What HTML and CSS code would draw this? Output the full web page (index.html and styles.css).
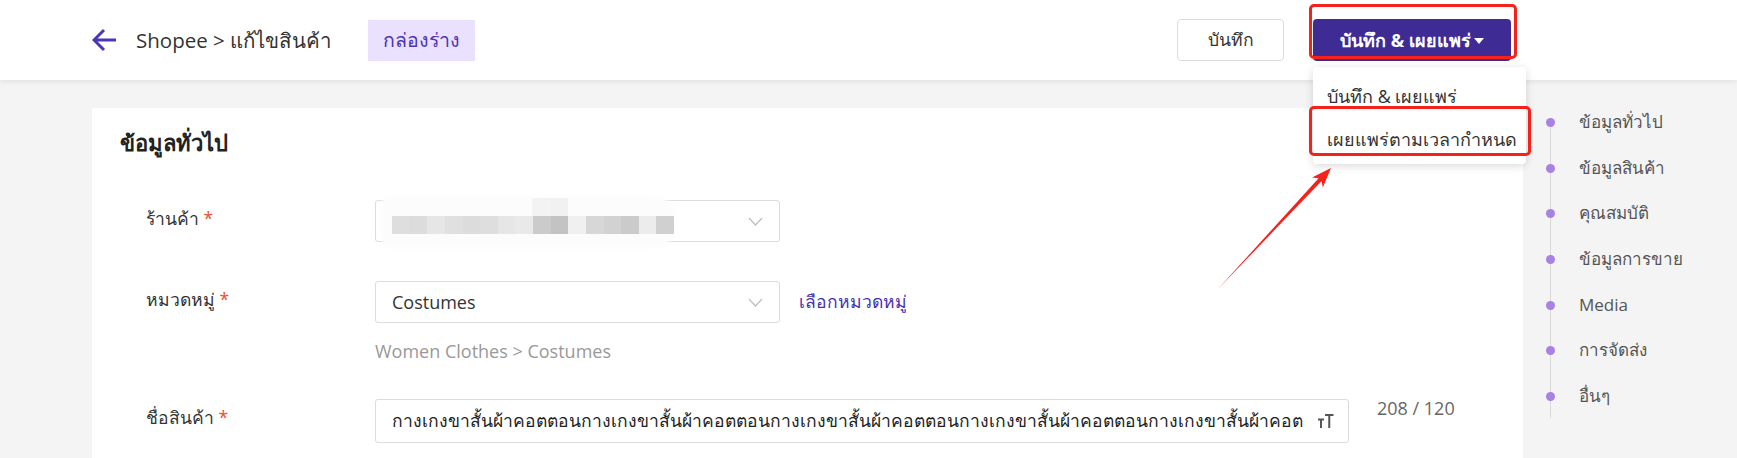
FILE: index.html
```html
<!DOCTYPE html>
<html lang="th">
<head>
<meta charset="utf-8">
<title>Shopee แก้ไขสินค้า</title>
<link rel="stylesheet" href="styles.css">
</head>
<body>
<header class="topbar">
  <div class="topbar-left">
    <svg class="back-icon" width="26" height="24" viewBox="0 0 26 24"><path d="M2 12 H24 M12 2 L2 12 L12 22" fill="none" stroke="#4a37b6" stroke-width="3" stroke-linecap="butt" stroke-linejoin="miter"/></svg>
    <span class="crumb">Shopee &gt; แก้ไขสินค้า</span>
    <span class="badge">กล่องร่าง</span>
  </div>
  <div class="topbar-right">
    <button class="btn btn-outline">บันทึก</button>
    <div class="publish">
      <button class="btn btn-primary">บันทึก &amp; เผยแพร่<span class="caret"></span></button>
      <div class="dropdown">
        <div class="dd-item">บันทึก &amp; เผยแพร่</div>
        <div class="dd-item">เผยแพร่ตามเวลากำหนด</div>
      </div>
    </div>
  </div>
</header>

<main class="main">
  <section class="card">
    <h2 class="card-title">ข้อมูลทั่วไป</h2>
    <div class="form">
      <div class="row row-shop">
        <label class="label">ร้านค้า <span class="req">*</span></label>
        <div class="control">
          <div class="select">
            <div class="mosaic">
              <div class="mosaic-top"><i class="m1"></i><i class="m2"></i></div>
              <div class="mosaic-row">
                <i class="c1"></i><i class="c2"></i><i class="c3"></i><i class="c4"></i><i class="c2"></i><i class="c1"></i><i class="c3"></i><i class="c5"></i><i class="c6"></i><i class="c7"></i><i class="c8"></i><i class="c9"></i><i class="c10"></i><i class="c6"></i><i class="c11"></i><i class="c12"></i>
              </div>
            </div>
            <svg class="chev" width="15" height="9" viewBox="0 0 15 9"><path d="M1 1 L7.5 8 L14 1" fill="none" stroke="#bdbdbd" stroke-width="1.2"/></svg>
          </div>
        </div>
      </div>
      <div class="row row-cat">
        <label class="label">หมวดหมู่ <span class="req">*</span></label>
        <div class="control">
          <div class="control-line">
            <div class="select"><span class="select-value">Costumes</span>
              <svg class="chev" width="15" height="9" viewBox="0 0 15 9"><path d="M1 1 L7.5 8 L14 1" fill="none" stroke="#bdbdbd" stroke-width="1.2"/></svg>
            </div>
            <a class="link">เลือกหมวดหมู่</a>
          </div>
          <div class="helper">Women Clothes &gt; Costumes</div>
        </div>
      </div>
      <div class="row row-name">
        <label class="label">ชื่อสินค้า <span class="req">*</span></label>
        <div class="control">
          <div class="control-line top">
            <div class="input">
              <span class="input-text">กางเกงขาสั้นผ้าคอตตอนกางเกงขาสั้นผ้าคอตตอนกางเกงขาสั้นผ้าคอตตอนกางเกงขาสั้นผ้าคอตตอนกางเกงขาสั้นผ้าคอต</span>
              <svg class="tt" width="17" height="16" viewBox="0 0 17 16"><path d="M1 6.5 H7 M4 6.5 V15 M8 2 H16.5 M12.25 2 V15" fill="none" stroke="#555" stroke-width="2"/></svg>
            </div>
            <span class="counter">208 / 120</span>
          </div>
        </div>
      </div>
    </div>
  </section>
  <nav class="side-nav">
    <ul>
      <li><span class="dot"></span>ข้อมูลทั่วไป</li>
      <li><span class="dot"></span>ข้อมูลสินค้า</li>
      <li><span class="dot"></span>คุณสมบัติ</li>
      <li><span class="dot"></span>ข้อมูลการขาย</li>
      <li><span class="dot"></span>Media</li>
      <li><span class="dot"></span>การจัดส่ง</li>
      <li><span class="dot"></span>อื่นๆ</li>
    </ul>
  </nav>
</main>

<div class="annot annot-btn"></div>
<div class="annot annot-item"></div>
<svg class="annot-arrow" width="1737" height="458" viewBox="0 0 1737 458"><polygon points="1217.5,289.5 1321.6,181.1 1322.8,187.6 1331,168 1312,177.5 1318.6,178.3" fill="#f5221b"/></svg>
</body>
</html>
```

FILE: styles.css
```css
* { box-sizing: border-box; }
html, body { margin: 0; padding: 0; }
body {
  width: 1737px;
  height: 458px;
  overflow: hidden;
  position: relative;
  background: #f4f4f4;
  font-family: "Open Sans", "Noto Sans", sans-serif;
  color: #333;
}

.topbar {
  height: 80px;
  background: #fff;
  display: flex;
  align-items: center;
  justify-content: space-between;
  padding: 0 226px 0 92px;
  box-shadow: 0 2px 5px rgba(0,0,0,0.07);
  position: relative;
  z-index: 2;
}
.topbar-left { display: flex; align-items: center; }
.back-icon { display: block; }
.crumb { margin-left: 18px; font-size: 20.5px; color: #333; }
.badge {
  margin-left: 36px;
  width: 107px;
  height: 41px;
  background: #e9e1fd;
  color: #4b35b5;
  font-size: 19.5px;
  display: flex;
  align-items: center;
  justify-content: center;
}
.topbar-right { display: flex; align-items: center; gap: 29px; }
.btn {
  font-family: inherit;
  height: 42px;
  border-radius: 4px;
  font-size: 17.5px;
  cursor: pointer;
}
.btn-outline {
  width: 107px;
  background: #fff;
  border: 1px solid #dcdcdc;
  color: #333;
}
.publish { position: relative; }
.btn-primary {
  width: 198px;
  background: #3e2b94;
  border: none;
  color: #fff;
  font-weight: 700;
  font-size: 18px;
  display: flex;
  align-items: center;
  justify-content: center;
  padding: 0;
}
.caret {
  display: inline-block;
  width: 0; height: 0;
  border-left: 5px solid transparent;
  border-right: 5px solid transparent;
  border-top: 6px solid #fff;
  margin-left: 3px;
  margin-top: 2px;
}
.dropdown {
  position: absolute;
  top: 48px;
  left: 0;
  width: 213px;
  background: #fff;
  border-radius: 4px;
  box-shadow: 0 2px 10px rgba(0,0,0,0.15);
  padding: 8px 0 3px;
}
.dd-item {
  height: 43px;
  line-height: 43px;
  padding-left: 14px;
  font-size: 18px;
  color: #333;
  white-space: nowrap;
}

.main {
  display: flex;
  padding: 28px 0 0 92px;
}
.card {
  flex: 1;
  background: #fff;
  padding: 19px 28px 0;
  height: 360px;
}
.card-title {
  margin: 0;
  font-size: 22px;
  line-height: 30px;
  font-weight: 700;
  color: #222;
}
.form { margin-top: 43px; padding-left: 26px; }
.row { display: grid; grid-template-columns: 229px auto; }
.row-cat { margin-top: 39px; }
.row-name { margin-top: 36px; }
.label {
  font-size: 17.5px;
  line-height: 24px;
  margin-top: 6px;
  color: #333;
}
.req { color: #ee4d2d; }
.control-line { display: flex; align-items: center; }
.control-line.top { align-items: flex-start; }
.select {
  position: relative;
  width: 405px;
  height: 42px;
  border: 1px solid #dcdcdc;
  border-radius: 3px;
  display: flex;
  align-items: center;
  padding-left: 16px;
  font-size: 18px;
  color: #333;
}
.chev { position: absolute; right: 16px; top: 16px; }
.link { margin-left: 19px; font-size: 17.5px; color: #4531b3; }
.helper { margin-top: 16px; font-size: 18px; line-height: 24px; color: #999; }
.input {
  width: 974px;
  height: 44px;
  border: 1px solid #dcdcdc;
  border-radius: 3px;
  display: flex;
  align-items: center;
  padding: 0 14px 0 16px;
  font-size: 17.5px;
  color: #222;
}
.input-text { flex: 1; white-space: nowrap; overflow: hidden; }
.tt { flex: none; margin-left: 6px; }
.counter { margin-left: 28px; font-size: 18px; color: #666; line-height: 18px; margin-top: 0; }

.mosaic {
  position: absolute;
  left: 8px;
  top: -3px;
  width: 290px;
  height: 48px;
  background: #fcfcfc;
  border-radius: 4px 20px 20px 4px;
  box-shadow: 0 0 4px 2px #fcfcfc;
}
.mosaic-top { display: flex; height: 18px; padding-left: 148px; }
.mosaic-top i { display: block; width: 18px; height: 18px; background: #f3f3f3; }
.mosaic-top .m2 { background: #f1f1f1; }
.mosaic-row { display: flex; padding-left: 8px; }
.mosaic-row i { display: block; width: 18px; height: 18px; }
.c1 { background: #dedede; }
.c2 { background: #dcdcdc; }
.c3 { background: #e6e6e6; }
.c4 { background: #e0e0e0; }
.c5 { background: #e9e9e9; }
.c6 { background: #cbcbcb; }
.c7 { background: #c3c3c3; }
.c8 { background: #f0f0f0; }
.c9 { background: #d7d7d7; }
.c10 { background: #d2d2d2; }
.c11 { background: #ececec; }
.c12 { background: #d0d0d0; }

.side-nav { width: 214px; padding-top: 2px; }
.side-nav ul {
  list-style: none;
  margin: 0;
  padding: 0;
  position: relative;
}
.side-nav ul::before {
  content: "";
  position: absolute;
  left: 27px;
  top: 12px;
  bottom: 12px;
  width: 1px;
  background: #dadada;
}
.side-nav li {
  position: relative;
  height: 45.7px;
  line-height: 24px;
  padding-left: 56px;
  font-size: 17px;
  color: #555;
  display: flex;
  align-items: flex-start;
}
.dot {
  position: absolute;
  left: 23px;
  top: 8px;
  width: 9px;
  height: 9px;
  border-radius: 50%;
  background: #a782e3;
}

.annot {
  position: absolute;
  border: 3px solid #f5221b;
  border-radius: 5px;
  z-index: 5;
  pointer-events: none;
}
.annot-btn { left: 1309px; top: 4px; width: 208px; height: 55px; }
.annot-item { left: 1309px; top: 106px; width: 222px; height: 50px; }
.annot-arrow { position: absolute; left: 0; top: 0; z-index: 6; pointer-events: none; }
```
